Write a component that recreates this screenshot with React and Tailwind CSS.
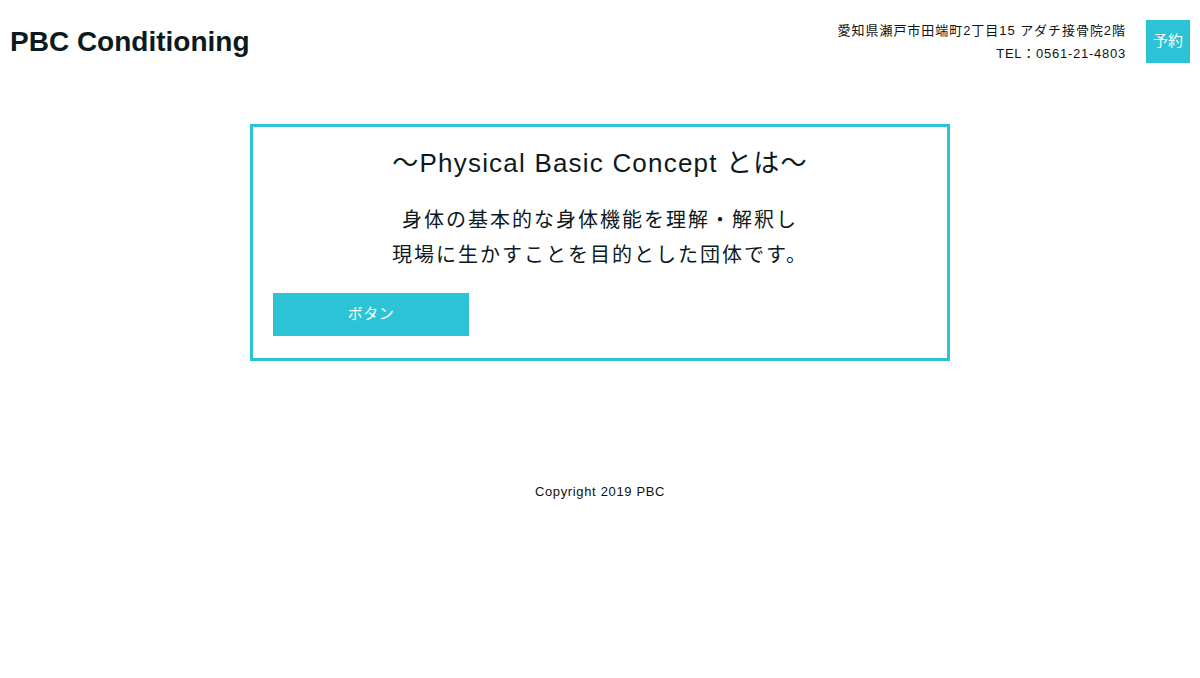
export default function App() {
  return (
    <div className="min-h-screen bg-white text-[#0c191d]" style={{ fontFamily: '"Liberation Sans", "Noto Sans CJK JP", sans-serif' }}>
      <header className="flex items-start justify-between px-[10px] pt-[20px] h-[84px]">
        <h1 className="text-[28px] font-bold leading-[43px]">PBC Conditioning</h1>
        <div className="flex items-start gap-[20px]">
          <div className="text-right text-[13px] leading-[23px] text-[#111] -mt-[1px]">
            <p className="tracking-[0.95px]">愛知県瀬戸市田端町2丁目15 アダチ接骨院2階</p>
            <p className="tracking-[0.75px]">TEL：0561-21-4803</p>
          </div>
          <button className="w-[44px] h-[43px] bg-[#2bc3d5] text-white text-[15px] flex items-center justify-center">予約</button>
        </div>
      </header>
      <main className="flex justify-center mt-[40px]">
        <section className="w-[700px] border-[3px] border-[#2bc3d5] px-[20px] pt-[20px] pb-[22px]">
          <h2 className="text-center text-[26px] leading-[32px] tracking-[1.2px]">〜Physical Basic Concept とは〜</h2>
          <p className="text-center text-[20px] leading-[35px] mt-[24px] tracking-[2px]">
            身体の基本的な身体機能を理解・解釈し<br />現場に生かすことを目的とした団体です。
          </p>
          <button className="mt-[20px] w-[196px] h-[43px] bg-[#2bc3d5] text-white text-[15px] tracking-[0.5px] flex items-center justify-center">ボタン</button>
        </section>
      </main>
      <footer className="text-center text-[13px] leading-[20px] mt-[121px] tracking-[0.65px] text-[#111]">Copyright 2019 PBC</footer>
    </div>
  )
}
